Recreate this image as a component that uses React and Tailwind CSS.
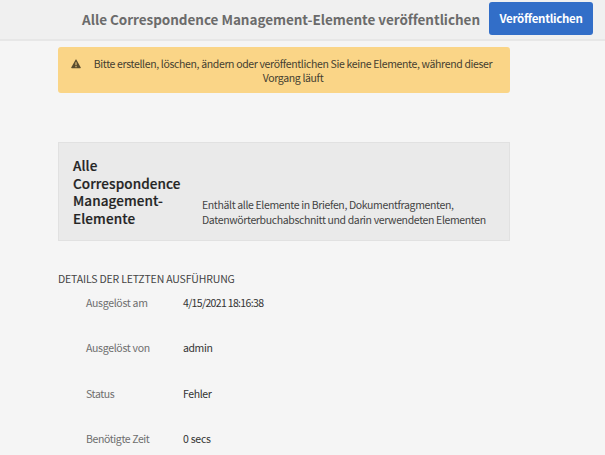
const details = [
  { label: 'Ausgelöst am', value: '4/15/2021 18:16:38', labelClass: 'tracking-[-0.3px]', valueClass: 'tracking-[-0.66px]' },
  { label: 'Ausgelöst von', value: 'admin', labelClass: 'tracking-[-0.3px]', valueClass: 'tracking-[-0.4px]' },
  { label: 'Status', value: 'Fehler', labelClass: 'tracking-[-0.4px]', valueClass: 'tracking-[-0.4px]' },
  { label: 'Benötigte Zeit', value: '0 secs', labelClass: 'tracking-[-0.38px]', valueClass: 'tracking-[-0.25px]' },
];

function AlertIcon() {
  return (
    <svg className="mt-[2px] h-[10px] w-[10px] shrink-0" viewBox="0 0 10 10" aria-hidden="true">
      <path
        fill="#5a4d2e"
        fillRule="evenodd"
        d="M4.55.75a.52.52 0 0 1 .9 0l4.2 7.6a.6.6 0 0 1-.5.9H.85a.6.6 0 0 1-.5-.9zM4.5 3.2v3h1v-3zm0 3.9v1.05h1V7.1z"
      />
    </svg>
  );
}

export default function App() {
  return (
    <div className="h-[455px] w-[605px] overflow-hidden bg-[#f5f5f5] font-['Noto_Sans_CJK_SC','Noto_Sans',sans-serif] text-[10.5px] leading-[14.5px] text-[#444444]">
      <header className="flex h-[41px] items-start justify-end border-b-2 border-[#e7e7e7] bg-[#f0f0f0] pr-3">
        <h1 className="mt-[9px] mr-[9px] text-[13.5px] leading-5 font-bold tracking-[-0.04px] whitespace-nowrap text-[#6b6b6b]">
          Alle Correspondence Management-Elemente veröffentlichen
        </h1>
        <button className="mt-[2px] h-[33px] w-[104px] rounded-[3px] bg-[#326ec8] pb-px text-[11.5px] leading-5 font-bold tracking-[-0.3px] whitespace-nowrap text-white">
          Veröffentlichen
        </button>
      </header>
      <main className="ml-[58px] w-[452px]">
        <div className="mt-[6px] flex h-[46px] items-start rounded-[3px] bg-[#fad587] pt-[10px] pl-[13px]">
          <AlertIcon />
          <p className="ml-3 w-[400px] text-center leading-[14px] tracking-[-0.35px] whitespace-nowrap text-[#453e30]">
            Bitte erstellen, löschen, ändern oder veröffentlichen Sie keine Elemente, während dieser
            <br />
            Vorgang läuft
          </p>
        </div>
        <section className="mt-[49px] flex h-[99px] items-end border border-[#e1e1e1] bg-[#eaeaea] pb-[13px] pl-[14px]">
          <h2 className="w-[129px] shrink-0 text-[13.5px] leading-[17.4px] font-medium tracking-[0.1px] text-[#242424] [-webkit-text-stroke:0.2px_#242424]">
            Alle
            <br />
            Correspondence
            <br />
            Management-
            <br />
            Elemente
          </h2>
          <p className="tracking-[-0.36px] whitespace-nowrap">
            Enthält alle Elemente in Briefen, Dokumentfragmenten,
            <br />
            Datenwörterbuchabschnitt und darin verwendeten Elementen
          </p>
        </section>
        <h3 className="mt-[31px] tracking-[-0.16px]">DETAILS DER LETZTEN AUSFÜHRUNG</h3>
        <dl className="mt-[9px]">
          {details.map((row) => (
            <div key={row.label} className="flex h-[45.6px] pl-7 whitespace-nowrap">
              <dt className={`w-[97px] text-[#6e6e6e] ${row.labelClass}`}>{row.label}</dt>
              <dd className={`text-[#333333] ${row.valueClass}`}>{row.value}</dd>
            </div>
          ))}
        </dl>
      </main>
    </div>
  );
}
